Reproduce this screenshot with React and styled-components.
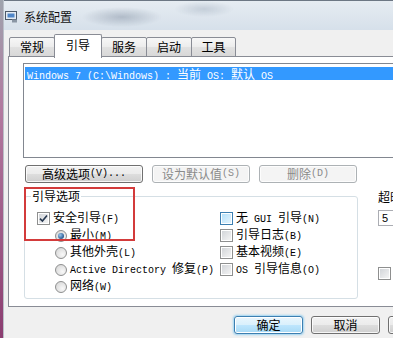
import React from 'react'
import styled, { createGlobalStyle } from 'styled-components'

const GlobalStyle = createGlobalStyle`
  html, body {
    margin: 0;
    padding: 0;
    overflow: hidden;
  }
  body {
    font-family: "Noto Sans CJK SC", "Liberation Sans", sans-serif;
    font-size: 12px;
    color: #000;
  }
  * { box-sizing: border-box; }
`

const Desktop = styled.div`
  display: flex;
  width: 393px;
  height: 338px;
  overflow: hidden;
  padding-left: 3px;
  background: linear-gradient(to bottom, #9ea3ad 0, #b27aa0 110px, #8b3d70 338px);
`

const Window = styled.div`
  flex: 0 0 560px;
  display: flex;
  flex-direction: column;
  background: #f0f0f0;
  border-left: 1px solid #b9bfc8;
`

const TitleBar = styled.div`
  height: 30px;
  display: flex;
  align-items: center;
  gap: 6px;
  padding: 2px 0 0 1px;
  border-top: 1px solid #6d7784;
  background:
    radial-gradient(ellipse 40px 10px at 118px 16px, rgba(110, 125, 145, 0.4), transparent),
    radial-gradient(ellipse 30px 8px at 200px 8px, rgba(130, 145, 165, 0.3), transparent),
    linear-gradient(to bottom, #e6ecf2, #d6e0ea);
`

const TitleText = styled.span`
  font-size: 12px;
  line-height: 14px;
  color: #111;
`

const Body = styled.div`
  flex: 1;
  display: flex;
  flex-direction: column;
  padding: 3px 0 0 4px;
`

const TabRow = styled.div`
  display: flex;
  align-items: flex-end;
  height: 24px;
  padding-left: 2px;
`

const Tab = styled.div`
  position: relative;
  width: ${p => p.$w}px;
  height: ${p => (p.$active ? 24 : 20)}px;
  margin-left: -1px;
  margin-bottom: ${p => (p.$active ? -1 : 0)}px;
  z-index: ${p => (p.$active ? 1 : 0)};
  display: flex;
  align-items: ${p => (p.$active ? 'flex-start' : 'center')};
  justify-content: center;
  padding-top: ${p => (p.$active ? 3 : 0)}px;
  padding-bottom: ${p => (p.$active ? 0 : 1)}px;
  border: 1px solid #898c95;
  border-bottom: ${p => (p.$active ? 'none' : '1px solid #898c95')};
  border-radius: 2px 2px 0 0;
  background: ${p =>
    p.$active ? '#fff' : 'linear-gradient(to bottom, #f7f7f7 0%, #ececec 50%, #e1e1e1 51%, #d8d8d8 100%)'};
  font-size: 12px;
  line-height: 14px;
`

const Panel = styled.div`
  position: relative;
  height: 251px;
  margin-top: -1px;
  margin-right: 8px;
  padding: 6px 14px 0 14px;
  border: 1px solid #898c95;
  background: #fff;
`

const ListBox = styled.div`
  height: 95px;
  padding: 2px 1px;
  border: 1px solid #828790;
  background: #fff;
`

const ListRow = styled.div`
  height: 13px;
  margin-top: 1px;
  padding-left: 2px;
  white-space: pre;
  background: ${p => (p.$selected ? '#3399ff' : 'transparent')};
  color: ${p => (p.$selected ? '#fff' : '#000')};
  font-size: 12px;
  line-height: 13px;
`

const Latin = styled.span`
  font-family: "Liberation Mono", "DejaVu Sans Mono", monospace;
  font-size: 10px;
`

const ButtonRow = styled.div`
  display: flex;
  gap: 9px;
  margin-top: 7px;
  padding-left: 2px;
`

const Button = styled.div`
  width: ${p => p.$w}px;
  height: 18px;
  display: flex;
  align-items: center;
  justify-content: center;
  border: 1px solid ${p => (p.$disabled ? '#adb2b5' : p.$default ? '#3c7fb1' : '#707070')};
  border-radius: 3px;
  color: ${p => (p.$disabled ? '#8a8a8a' : '#000')};
  background: ${p =>
    p.$disabled
      ? '#f4f4f4'
      : p.$default
      ? 'linear-gradient(to bottom, #eaf6fd 0%, #d9f0fc 50%, #bee6fd 51%, #a7d9f5 100%)'
      : 'linear-gradient(to bottom, #f2f2f2 0%, #ebebeb 50%, #dddddd 51%, #cfcfcf 100%)'};
  box-shadow: ${p =>
    p.$default
      ? '0 0 2px 1px rgba(100, 190, 240, 0.6), inset 0 0 0 1px #fff'
      : 'inset 0 0 0 1px rgba(255,255,255,0.8)'};
  font-size: 12px;
  line-height: 14px;
  white-space: pre;
`

const LowerRow = styled.div`
  display: flex;
  align-items: flex-start;
  gap: 20px;
  margin-top: 6px;
  padding-left: 1px;
`

const Group = styled.fieldset`
  flex: none;
  width: 334px;
  height: 110px;
  margin: 0;
  padding: 0 6px;
  border: 1px solid #d5dfe5;
  border-radius: 3px;
  min-inline-size: 0;
`

const Legend = styled.legend`
  padding: 0 1px;
  font-size: 12px;
  line-height: 14px;
`

const GroupBody = styled.div`
  display: flex;
  padding: 7px 0 0 6px;
`

const Column = styled.div`
  display: flex;
  flex-direction: column;
  width: ${p => (p.$w ? `${p.$w}px` : 'auto')};
`

const Option = styled.div`
  height: 17px;
  display: flex;
  align-items: center;
  gap: 3px;
  padding-left: ${p => p.$indent || 0}px;
`

const Label = styled.span`
  white-space: pre;
  font-size: 12px;
  line-height: 14px;
`

const CheckBox = styled.span`
  flex: none;
  width: 13px;
  height: 13px;
  display: flex;
  align-items: center;
  justify-content: center;
  border: 1px solid ${p => (p.$hover ? '#3c7fb1' : '#8e8f8f')};
  box-shadow: inset 0 0 0 1px #fff;
  background: ${p =>
    p.$hover
      ? 'linear-gradient(135deg, #b1dffa, #e9f6fd)'
      : 'linear-gradient(135deg, #cfd2d6, #f7f7f7)'};
`

const Radio = styled.span`
  flex: none;
  position: relative;
  width: 12px;
  height: 12px;
  border-radius: 50%;
  border: 1px solid #8e8f8f;
  background: radial-gradient(circle at 65% 65%, #f8f8f8, #d2d2d2);
  &::after {
    content: '';
    display: ${p => (p.$checked ? 'block' : 'none')};
    position: absolute;
    left: 2px;
    top: 2px;
    width: 6px;
    height: 6px;
    border-radius: 50%;
    background: radial-gradient(circle at 35% 35%, #9cc8ee, #2a5b93 70%, #1d3f6b);
  }
`

const Side = styled.div`
  display: flex;
  flex-direction: column;
  padding-top: 1px;
`

const SideLabel = styled.div`
  font-size: 12px;
  line-height: 14px;
  white-space: pre;
`

const TextInput = styled.div`
  width: 60px;
  height: 16px;
  margin-top: 3px;
  padding-left: 3px;
  border: 1px solid #abadb3;
  display: flex;
  align-items: center;
  font-family: "Liberation Sans", sans-serif;
  font-size: 11px;
`

const SideCheck = styled.div`
  margin-top: 39px;
`

const Highlight = styled.div`
  position: absolute;
  left: 15px;
  top: 130px;
  width: 111px;
  height: 54px;
  border: 2px solid #d33b3b;
  pointer-events: none;
`

const Footer = styled.div`
  display: flex;
  justify-content: flex-end;
  gap: 8px;
  margin-top: 9px;
  padding-right: 57px;
`

const Check = ({ checked, hover }) => (
  <CheckBox $hover={hover}>
    {checked && (
      <svg width="9" height="9" viewBox="0 0 9 9">
        <path d="M1 4.6 L3.4 7 L8 1.4" fill="none" stroke="#26374f" strokeWidth="1.6" />
      </svg>
    )}
  </CheckBox>
)

const AppIcon = () => (
  <svg width="13" height="13" viewBox="0 0 13 13">
    <rect x="0.5" y="1.5" width="11" height="8" fill="#e4ebf3" stroke="#4b5868" />
    <rect x="2.5" y="3.5" width="7" height="4" fill="#4f86c8" />
    <rect x="7" y="9.5" width="5" height="3" fill="#8a96a4" />
  </svg>
)

const tabs = [
  { label: '常规', w: 46 },
  { label: '引导', w: 48, active: true },
  { label: '服务', w: 46 },
  { label: '启动', w: 46 },
  { label: '工具', w: 45 },
]

export default function App() {
  return (
    <>
      <GlobalStyle />
      <Desktop>
        <Window>
          <TitleBar>
            <AppIcon />
            <TitleText>系统配置</TitleText>
          </TitleBar>
          <Body>
            <TabRow>
              {tabs.map(t => (
                <Tab key={t.label} $w={t.w} $active={t.active}>
                  {t.label}
                </Tab>
              ))}
            </TabRow>
            <Panel>
              <ListBox>
                <ListRow $selected>
                  <Latin>Windows 7 (C:\Windows) : </Latin>当前<Latin> OS: </Latin>默认<Latin> OS</Latin>
                </ListRow>
              </ListBox>
              <ButtonRow>
                <Button $w={118}>
                  高级选项<Latin>(V)...</Latin>
                </Button>
                <Button $w={98} $disabled>
                  设为默认值<Latin>(S)</Latin>
                </Button>
                <Button $w={98} $disabled>
                  删除<Latin>(D)</Latin>
                </Button>
              </ButtonRow>
              <LowerRow>
                <Group>
                  <Legend>引导选项</Legend>
                  <GroupBody>
                    <Column $w={183}>
                      <Option>
                        <Check checked />
                        <Label>安全引导<Latin>(F)</Latin></Label>
                      </Option>
                      <Option $indent={18}>
                        <Radio $checked />
                        <Label>最小<Latin>(M)</Latin></Label>
                      </Option>
                      <Option $indent={18}>
                        <Radio />
                        <Label>其他外壳<Latin>(L)</Latin></Label>
                      </Option>
                      <Option $indent={18}>
                        <Radio />
                        <Label><Latin>Active Directory </Latin>修复<Latin>(P)</Latin></Label>
                      </Option>
                      <Option $indent={18}>
                        <Radio />
                        <Label>网络<Latin>(W)</Latin></Label>
                      </Option>
                    </Column>
                    <Column>
                      <Option>
                        <Check hover />
                        <Label>无<Latin> GUI </Latin>引导<Latin>(N)</Latin></Label>
                      </Option>
                      <Option>
                        <Check />
                        <Label>引导日志<Latin>(B)</Latin></Label>
                      </Option>
                      <Option>
                        <Check />
                        <Label>基本视频<Latin>(E)</Latin></Label>
                      </Option>
                      <Option>
                        <Check />
                        <Label><Latin>OS </Latin>引导信息<Latin>(O)</Latin></Label>
                      </Option>
                    </Column>
                  </GroupBody>
                </Group>
                <Side>
                  <SideLabel>
                    超时<Latin>(T):</Latin>
                  </SideLabel>
                  <TextInput>5</TextInput>
                  <SideCheck>
                    <Option>
                      <Check />
                      <Label>使所有引导设置成为永久设置<Latin>(K)</Latin></Label>
                    </Option>
                  </SideCheck>
                </Side>
              </LowerRow>
              <Highlight />
            </Panel>
            <Footer>
              <Button $w={69} $default>确定</Button>
              <Button $w={69}>取消</Button>
              <Button $w={69}>
                应用<Latin>(A)</Latin>
              </Button>
              <Button $w={69}>帮助</Button>
            </Footer>
          </Body>
        </Window>
      </Desktop>
    </>
  )
}
